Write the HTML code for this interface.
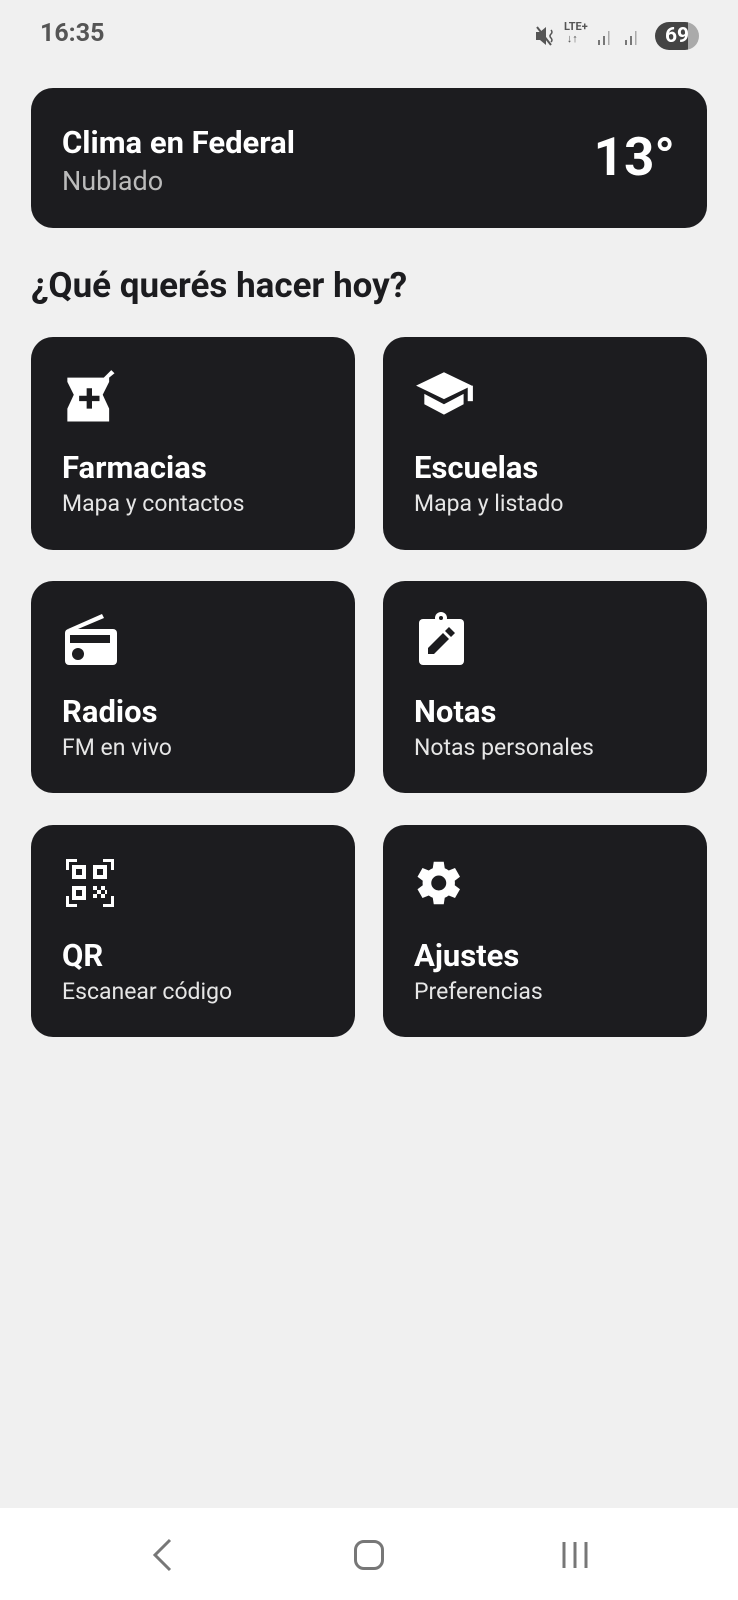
<!DOCTYPE html>
<html><head><meta charset="utf-8"><style>
*{margin:0;padding:0;box-sizing:border-box}
body{width:738px;height:1600px;background:#f0f0f0;font-family:"Roboto","Liberation Sans",sans-serif;position:relative;overflow:hidden}
.abs{position:absolute}
.card{position:absolute;background:#1c1c1f;border-radius:22px;color:#fff}
.t{position:absolute;left:31px;font-weight:bold;font-size:31px;top:112px}
.s{position:absolute;left:31px;font-size:23px;color:#e6e6e6;top:153px}
.ic{position:absolute;left:31px;top:30px}
</style></head><body>
<div class="abs" style="left:40px;top:19px;font-size:25px;font-weight:bold;color:#555">16:35</div>
<svg class="abs" style="left:534px;top:24px" width="24" height="24" viewBox="0 0 24 24"><path d="M2 8h4l6-5v18l-6-5H2z" fill="#555"/><path d="M3 3l14 18" stroke="#555" stroke-width="2"/><path d="M17 6q2 2 0 4q-2 2 0 4q2 2 0 4" stroke="#555" stroke-width="1.5" fill="none"/></svg>
<div class="abs" style="left:564px;top:21px;font-size:11px;color:#555;line-height:12px;font-weight:bold">LTE+<br>&nbsp;↓↑</div>
<svg class="abs" style="left:598px;top:28px" width="50" height="18"><g fill="#777"><rect x="0" y="12" width="2" height="5"/><rect x="5" y="8" width="2" height="9"/><rect x="10" y="3" width="1.5" height="14" fill="#aaa"/><rect x="27" y="12" width="2" height="5"/><rect x="32" y="8" width="2" height="9"/><rect x="37" y="3" width="1.5" height="14" fill="#aaa"/></g></svg>
<div class="abs" style="left:655px;top:22px;width:44px;height:28px;border-radius:14px;background:linear-gradient(90deg,#444 75%,#aaa 75%);color:#fff;font-weight:bold;font-size:21px;text-align:center;line-height:28px">69</div>

<div class="card" style="left:31px;top:88px;width:676px;height:140px">
<div class="abs" style="left:31px;top:36px;font-size:31px;font-weight:bold">Clima en Federal</div>
<div class="abs" style="left:31px;top:77px;font-size:27px;color:#bbb">Nublado</div>
<div class="abs" style="right:32px;top:38px;font-size:53px;font-weight:bold">13°</div>
</div>
<div class="abs" style="left:31px;top:265px;font-size:35px;font-weight:bold;color:#1c1c1f">¿Qué querés hacer hoy?</div>

<div class="card" style="left:31px;top:337px;width:324px;height:213px">
<svg class="ic" width="60" height="60" viewBox="0 0 56 56" style="top:32px"><path d="M5 8h34l7-7 3 3-5 4v4l-6 12 6 13v12H5V37l6-13-6-12z" fill="#fff"/><path d="M23 18h5v7h7v5h-7v7h-5v-7h-7v-5h7z" fill="#1c1c1f"/></svg>
<div class="t">Farmacias</div><div class="s">Mapa y contactos</div></div>
<div class="card" style="left:383px;top:337px;width:324px;height:213px">
<svg class="ic" width="62" height="58" viewBox="0 0 60 56"><path d="M29 5L2 18l27 13 27-13z" fill="#fff"/><path d="M10 26v10l19 10 19-10V26L29 36z" fill="#fff"/><rect x="52" y="18" width="5" height="15" fill="#fff"/></svg>
<div class="t">Escuelas</div><div class="s">Mapa y listado</div></div>

<div class="card" style="left:31px;top:581px;width:324px;height:212px">
<svg class="ic" width="56" height="56" viewBox="0 0 56 56"><path d="M6 18L40 3l2 4-26 11z" fill="#fff"/><rect x="3" y="18" width="52" height="36" rx="4" fill="#fff"/><rect x="8" y="24" width="40" height="8" fill="#1c1c1f"/><circle cx="16" cy="43" r="6" fill="#1c1c1f"/></svg>
<div class="t">Radios</div><div class="s">FM en vivo</div></div>
<div class="card" style="left:383px;top:581px;width:324px;height:212px">
<svg class="ic" width="56" height="56" viewBox="0 0 56 56"><rect x="5" y="8" width="45" height="46" rx="4" fill="#fff"/><circle cx="27" cy="7" r="6" fill="#fff"/><circle cx="27" cy="7" r="2" fill="#1c1c1f"/><path d="M14 43v-6l15-15 6 6-15 15zM31 20l4-4 6 6-4 4z" fill="#1c1c1f"/></svg>
<div class="t">Notas</div><div class="s">Notas personales</div></div>

<div class="card" style="left:31px;top:825px;width:324px;height:212px">
<svg class="ic" width="56" height="56" viewBox="0 0 56 56" fill="#fff"><path d="M4 4h11v3H7v8H4zM41 4h11v11h-3V7h-8zM4 41h3v8h8v3H4zM49 41h3v11H41v-3h8z"/><path d="M10 10h14v14H10zM14 14v6h6v-6zM31 10h14v14H31zM35 14v6h6v-6zM10 31h14v14H10zM14 35v6h6v-6z" fill-rule="evenodd"/><path d="M31 31h4v4h-4zM39 31h4v4h-4zM35 35h4v4h-4zM31 39h4v4h-4zM39 39h4v4h-4zM43 35h2v4h-2z"/></svg>
<div class="t">QR</div><div class="s">Escanear código</div></div>
<div class="card" style="left:383px;top:825px;width:324px;height:212px">
<svg class="ic" width="60" height="60" viewBox="0 0 24 24" style="left:24px;top:28px"><path fill="#fff" fill-rule="evenodd" d="M19.1 12.9a7 7 0 000-1.8l2.1-1.6-2-3.5-2.5 1a7 7 0 00-1.6-.9L14.7 3.5h-4l-.4 2.6a7 7 0 00-1.6.9l-2.5-1-2 3.5 2.1 1.6a7 7 0 000 1.8l-2.1 1.6 2 3.5 2.5-1a7 7 0 001.6.9l.4 2.6h4l.4-2.6a7 7 0 001.6-.9l2.5 1 2-3.5zM12.7 15a3 3 0 110-6 3 3 0 010 6z"/></svg>
<div class="t">Ajustes</div><div class="s">Preferencias</div></div>

<div class="abs" style="left:0;top:1508px;width:738px;height:92px;background:#fff">
<svg class="abs" style="left:150px;top:30px" width="24" height="34"><path d="M20 2L5 17l15 15" stroke="#777" stroke-width="3" fill="none"/></svg>
<div class="abs" style="left:354px;top:32px;width:30px;height:30px;border:3px solid #777;border-radius:10px"></div>
<svg class="abs" style="left:560px;top:32px" width="30" height="30"><path d="M4 2v26M15 2v26M26 2v26" stroke="#777" stroke-width="3"/></svg>
</div>
</body></html>
